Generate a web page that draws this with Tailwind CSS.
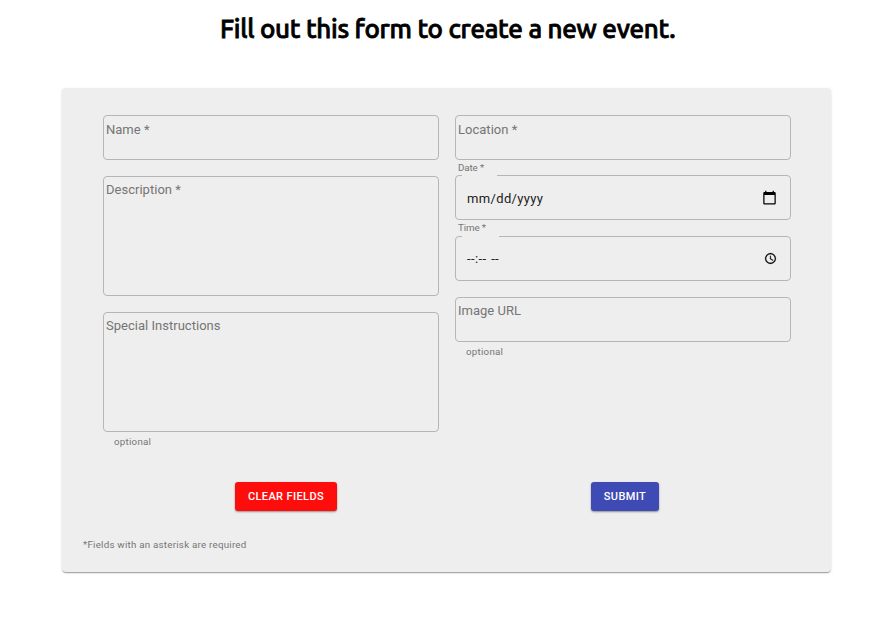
<!DOCTYPE html>
<html lang="en">
<head>
<meta charset="utf-8">
<title>Create event</title>
<script src="https://cdn.jsdelivr.net/npm/@tailwindcss/browser@4"></script>
</head>
<body class="bg-white font-['Roboto',sans-serif] h-[639px] overflow-hidden">
<h1 class="h-[88px] pt-[9px] pl-[220px] whitespace-nowrap font-['Ubuntu','Noto_Sans',sans-serif] text-[26px] leading-[40px] font-medium tracking-[-0.29px] [-webkit-text-stroke:0.8px_black] text-black">Fill out this form to create a new event.</h1>
<form class="ml-[62.4px] w-[769px] h-[484px] rounded-[4px] bg-[#eee] shadow-[0_2px_1px_-1px_rgba(0,0,0,0.2),0_1px_1px_0_rgba(0,0,0,0.14),0_1px_3px_0_rgba(0,0,0,0.12)] px-[40.6px] pt-[27px] flex flex-col">
  <div class="flex gap-4 h-[367px] text-[13px] leading-[15px] tracking-[0.02px] text-[#757575]">
    <div class="w-[336px] shrink-0">
      <div class="h-[45px] border border-[#b6b6b6] rounded-[4px] pl-[2px] pt-[6px]">Name *</div>
      <div class="mt-4 h-[120px] border border-[#b6b6b6] rounded-[4px] pl-[2px] pt-[5px]">Description *</div>
      <div class="mt-4 h-[120px] border border-[#b6b6b6] rounded-[4px] pl-[2px] pt-[5px]">Special Instructions</div>
      <p class="mt-[4px] pl-[11px] text-[9.75px] leading-[12px] tracking-[0.25px]">optional</p>
    </div>
    <div class="w-[336px] shrink-0">
      <div class="h-[45px] border border-[#b6b6b6] rounded-[4px] pl-[2px] pt-[6px]">Location *</div>
      <div class="h-[15px] pl-[3px] pt-[2px] text-[9.75px] leading-[12px] tracking-[-0.1px]">Date *</div>
      <div class="relative h-[45px] border border-[#b6b6b6] rounded-[4px] pl-[11px] pr-[13px] flex items-center justify-between text-[13px] tracking-[0.35px] text-[#212121]">
        <span class="absolute -top-px left-[6px] w-[35px] h-px bg-[#eee]"></span>
        <span class="pt-[2px]">mm/dd/yyyy</span>
        <svg class="w-[15px] h-[15px] mb-[1px]" viewBox="0 0 24 24" fill="#000"><path d="M20 3h-1V1h-2v2H7V1H5v2H4c-1.1 0-2 .9-2 2v16c0 1.1.9 2 2 2h16c1.1 0 2-.9 2-2V5c0-1.1-.9-2-2-2zm0 18H4V8h16v13z"/></svg>
      </div>
      <div class="h-[16px] pl-[3px] pt-[2px] text-[9.75px] leading-[12px] tracking-[-0.1px]">Time *</div>
      <div class="relative h-[45px] border border-[#b6b6b6] rounded-[4px] pl-[11px] pr-[13px] flex items-center justify-between text-[13px] tracking-[0.4px] text-[#212121]">
        <span class="absolute -top-px left-[6px] w-[37px] h-px bg-[#eee]"></span>
        <span class="pb-[1px] [word-spacing:1px]">--:-- --</span>
        <svg class="w-[13px] h-[13px]" viewBox="0 0 24 24" fill="#000" stroke="#000" stroke-width=".3"><path d="M12 2a10 10 0 1 0 0 20 10 10 0 0 0 0-20zm0 18a8 8 0 1 1 0-16 8 8 0 0 1 0 16zm.5-13H11v6l5.2 3.2.8-1.3-4.5-2.7z"/></svg>
      </div>
      <div class="mt-4 h-[45px] border border-[#b6b6b6] rounded-[4px] pl-[2px] pt-[5px]">Image URL</div>
      <p class="mt-[4px] pl-[11px] text-[9.75px] leading-[12px] tracking-[0.25px]">optional</p>
    </div>
  </div>
  <div class="flex pl-[132px] gap-[254px] h-[57px]">
    <button type="button" class="w-[102px] h-[29px] rounded-[3px] bg-[#ff0d0d] text-white text-[11px] leading-[15px] font-medium tracking-[0.38px] shadow-[0_1px_2px_rgba(0,0,0,0.4)]">CLEAR FIELDS</button>
    <button type="button" class="w-[68px] h-[29px] rounded-[3px] bg-[#3f4bb4] text-white text-[11px] leading-[15px] font-medium tracking-[0.38px] shadow-[0_1px_2px_rgba(0,0,0,0.4)]">SUBMIT</button>
  </div>
  <p class="-ml-5 text-[9.75px] leading-[12px] tracking-[0.24px] text-[#757575]">*Fields with an asterisk are required</p>
</form>
</body>
</html>
